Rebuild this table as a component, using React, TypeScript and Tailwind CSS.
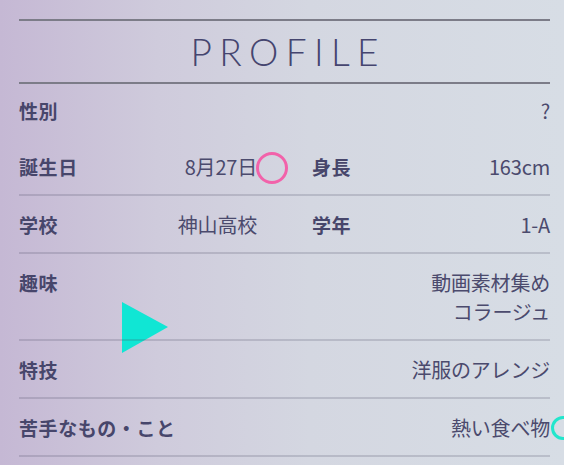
import React from "react";

const jp = { fontFamily: '"Noto Sans CJK JP", sans-serif' };

function Label({ children }: { children: React.ReactNode }) {
  return (
    <div className="font-bold text-[19px] leading-[29px] tracking-[0.03em] text-[#47466b]" style={jp}>
      {children}
    </div>
  );
}

function Value({ children }: { children: React.ReactNode }) {
  return (
    <div className="text-right text-[20px] leading-[29px] tracking-[-0.01em] text-[#4b4a6d]" style={jp}>
      {children}
    </div>
  );
}

function Pair({ label, value }: { label: string; value: React.ReactNode }) {
  return (
    <div className="flex items-start justify-between">
      <Label>{label}</Label>
      <Value>{value}</Value>
    </div>
  );
}

export default function App() {
  return (
    <div className="relative w-[564px] h-[465px] overflow-hidden bg-[linear-gradient(to_right,#c5b8d4_0%,#cfcbdc_28%,#d4d7e1_55%,#d7dde5_100%)]">
      <svg className="absolute left-[122px] top-[302px] z-0" width="46" height="51" viewBox="0 0 46 51">
        <polygon points="0,0 0,51 46,25" fill="#10e6d4" />
      </svg>

      <div className="relative z-10 pl-[19px] pr-[14px] pt-[19px]">
        <div className="h-[65px] border-y-2 border-[#7c7c88] flex items-center justify-center">
          <div className="text-[37px] font-light tracking-[0.2em] pl-[0.2em] text-[#45456f] leading-none" style={{ fontFamily: '"Lato", sans-serif' }}>
            PROFILE
          </div>
        </div>

        <div className="pt-[12px] pb-[13px]">
          <Pair label="性別" value="?" />
        </div>

        <div className="pt-[14px] pb-[13px] border-b-2 border-[rgba(70,70,95,0.2)] grid grid-cols-2 gap-x-[55px]">
          <Pair label="誕生日" value="8月27日" />
          <Pair label="身長" value="163cm" />
        </div>

        <div className="pt-[14px] pb-[13px] border-b-2 border-[rgba(70,70,95,0.2)] grid grid-cols-2 gap-x-[55px]">
          <Pair label="学校" value="神山高校" />
          <Pair label="学年" value="1-A" />
        </div>

        <div className="pt-[14px] pb-[13px] border-b-2 border-[rgba(70,70,95,0.2)]">
          <Pair
            label="趣味"
            value={
              <>
                動画素材集め
                <br />
                コラージュ
              </>
            }
          />
        </div>

        <div className="pt-[14px] pb-[13px] border-b-2 border-[rgba(70,70,95,0.2)]">
          <Pair label="特技" value="洋服のアレンジ" />
        </div>

        <div className="pt-[14px] pb-[13px] border-b-2 border-[rgba(70,70,95,0.2)]">
          <Pair label="苦手なもの・こと" value="熱い食べ物" />
        </div>
      </div>

      <div className="absolute z-20 left-[256px] top-[152px] w-[32px] h-[32px] rounded-full border-[3px] border-[#f262aa]" />
      <div className="absolute z-20 left-[551px] top-[416px] w-[24px] h-[24px] rounded-full border-[3px] border-[#22e6cc]" />
    </div>
  );
}
